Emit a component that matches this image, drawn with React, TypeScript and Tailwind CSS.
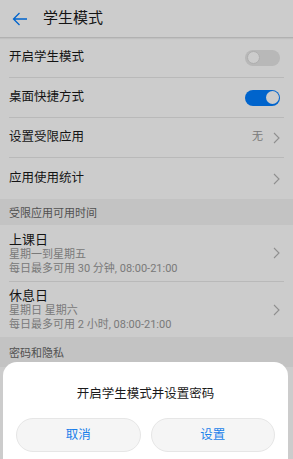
import React from "react";

const FONT = "font-['Roboto','Noto_Sans_CJK_SC',sans-serif]";

function Chevron() {
	return (
		<svg width="7" height="12" viewBox="0 0 7 12" className="shrink-0">
			<path d="M1 1l5 5-5 5" fill="none" stroke="#b3b3b3" strokeWidth="1.1" />
		</svg>
	);
}

function Toggle({ on }: { on: boolean }) {
	return on ? (
		<div className="flex h-[16px] w-[35px] items-center justify-end rounded-full bg-[#007dff] px-[1.5px]">
			<div className="h-[13px] w-[13px] rounded-full bg-white" />
		</div>
	) : (
		<div className="flex h-[16px] w-[35px] items-center rounded-full bg-[#e6e6e6] px-[1.5px]">
			<div className="h-[13px] w-[13px] rounded-full border border-[#dadada] bg-white" />
		</div>
	);
}

function Row({ label, right, last }: { label: string; right: React.ReactNode; last?: boolean }) {
	return (
		<div className="px-[9px]">
			<div className={`flex items-center justify-between pr-[4px] ${last ? "h-[41px]" : "h-[40px] border-b border-[#e8e8e8]"}`}>
				<span className="text-[12.5px] text-[#1a1a1a]">{label}</span>
				{right}
			</div>
		</div>
	);
}

function DayRow({ title, days, limit, last }: { title: string; days: string; limit: string; last?: boolean }) {
	return (
		<div className="px-[9px]">
			<div className={`flex items-center justify-between pr-[4px] ${last ? "h-[55px]" : "h-[57px] border-b border-[#e8e8e8]"}`}>
				<div className="flex flex-col">
					<span className="text-[13px] leading-[17px] text-[#1a1a1a]">{title}</span>
					<span className="text-[11px] leading-[14px] text-[#999999]">{days}</span>
					<span className="text-[11px] leading-[14px] text-[#999999]">{limit}</span>
				</div>
				<Chevron />
			</div>
		</div>
	);
}

export default function App() {
	return (
		<div className={`relative h-[459px] w-[293px] overflow-hidden bg-white ${FONT}`}>
			<header className="flex h-[38px] items-center border-b border-[#dedede] shadow-[0_1px_1px_rgba(0,0,0,0.06)]">
				<svg width="16" height="14" viewBox="0 0 16 14" className="ml-[12px]">
					<path d="M15 7H1.5M7.5 1L1.5 7l6 6" fill="none" stroke="#007dff" strokeWidth="1.3" />
				</svg>
				<span className="ml-[15px] text-[15px] text-[#1a1a1a]">学生模式</span>
			</header>

			<Row label="开启学生模式" right={<Toggle on={false} />} />
			<Row label="桌面快捷方式" right={<Toggle on />} />
			<Row
				label="设置受限应用"
				right={
					<div className="flex items-center gap-[10px]">
						<span className="text-[11px] text-[#999999]">无</span>
						<Chevron />
					</div>
				}
			/>
			<Row label="应用使用统计" right={<Chevron />} last />

			<div className="flex h-[26px] items-center bg-[#f4f4f4] px-[9px] pt-[4px]">
				<span className="text-[11px] text-[#666666]">受限应用可用时间</span>
			</div>
			<DayRow title="上课日" days="星期一到星期五" limit="每日最多可用 30 分钟, 08:00-21:00" />
			<DayRow title="休息日" days="星期日 星期六" limit="每日最多可用 2 小时, 08:00-21:00" last />
			<div className="flex h-[30px] items-center bg-[#f4f4f4] px-[9px] pt-[4px]">
				<span className="text-[11px] text-[#666666]">密码和隐私</span>
			</div>

			<div className="absolute inset-0 bg-black/20" />

			<div className="absolute left-[3px] right-[5px] top-[362px] flex h-[110px] flex-col rounded-[14px] bg-white px-[13px]">
				<p className="mt-[23px] text-center text-[12.5px] leading-[18px] text-[#1a1a1a]">开启学生模式并设置密码</p>
				<div className="mt-[15px] flex gap-[10px]">
					<button className="flex h-[34px] flex-1 items-center justify-center rounded-full border border-[#e6e6e6] bg-[#f5f5f5] text-[12.5px] text-[#1a7fea]">
						取消
					</button>
					<button className="flex h-[34px] flex-1 items-center justify-center rounded-full border border-[#e6e6e6] bg-[#f5f5f5] text-[12.5px] text-[#1a7fea]">
						设置
					</button>
				</div>
			</div>
		</div>
	);
}
